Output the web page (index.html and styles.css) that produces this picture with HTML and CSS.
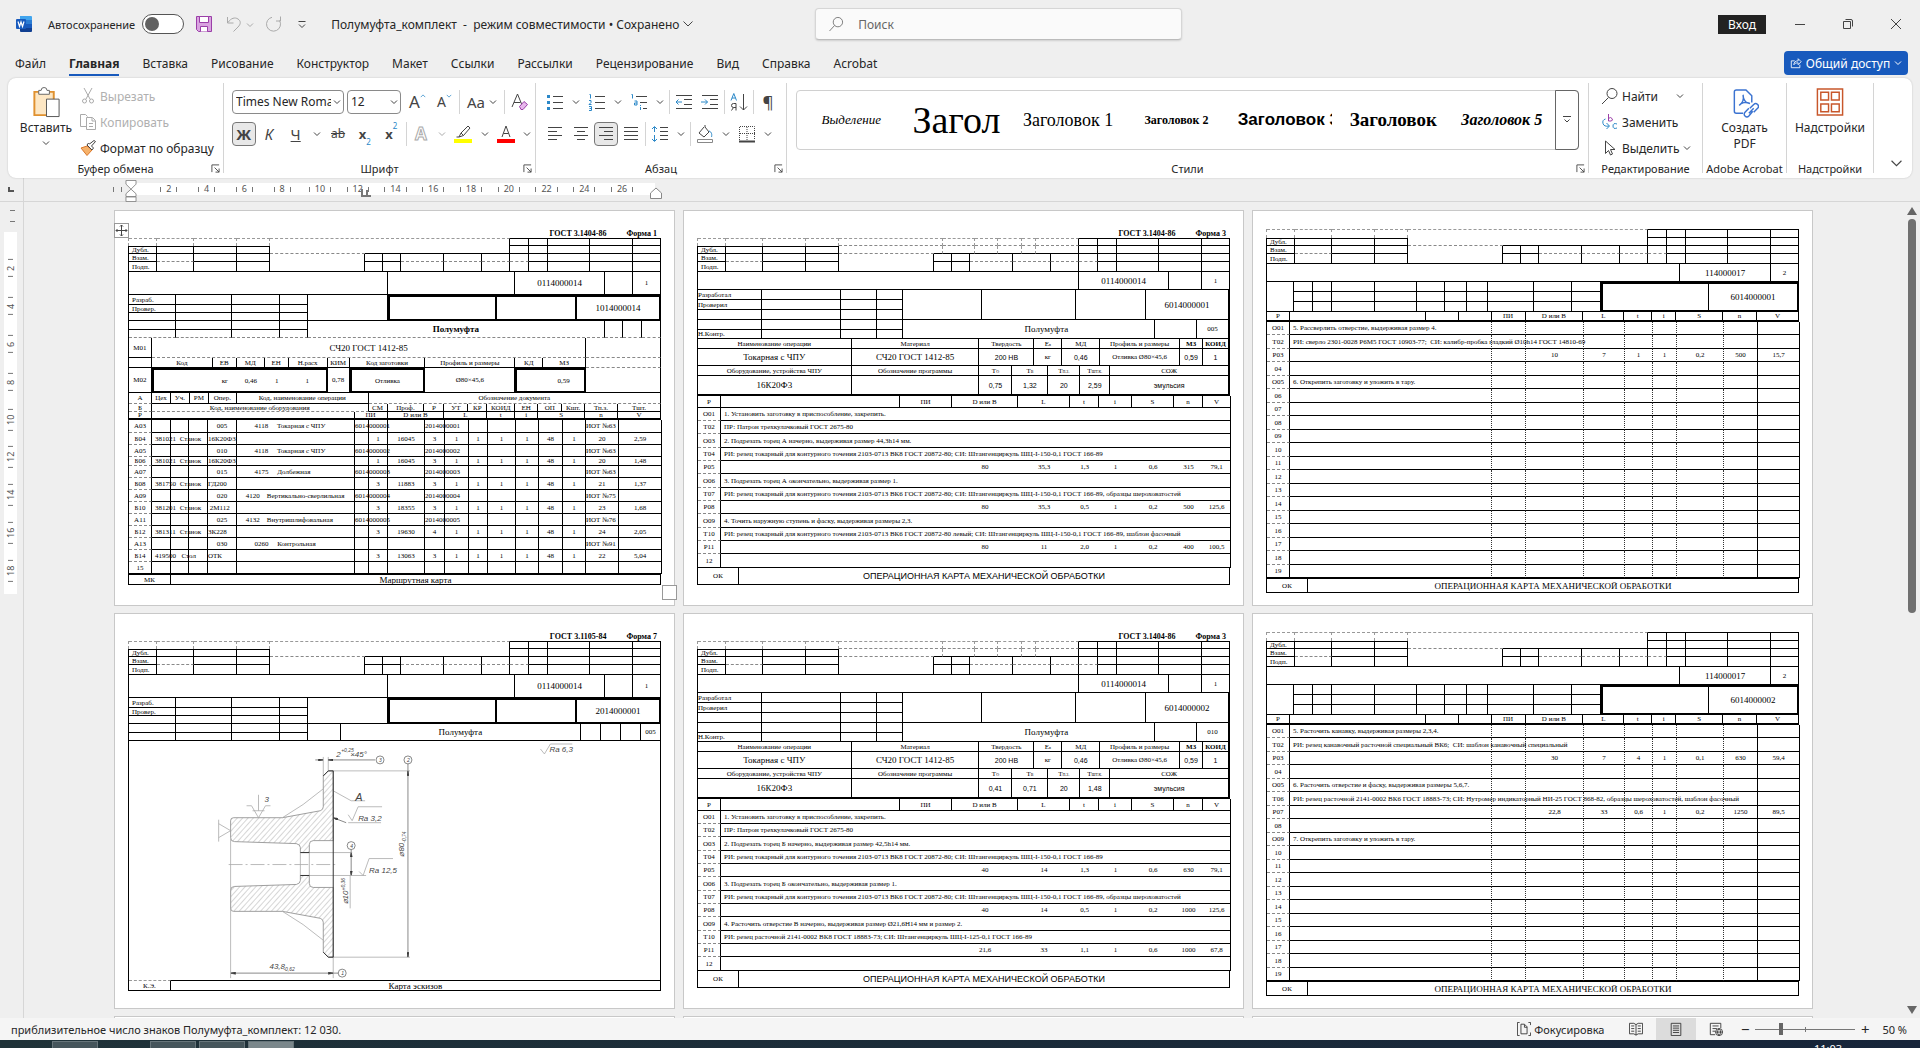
FILE: index.html
```html
<!doctype html>
<html lang="ru">
<head>
    <meta charset="UTF-8">
    <meta name="viewport" content="width=device-width, initial-scale=1.0">
    <title>Полумуфта_комплект - Word</title>
    <link rel="stylesheet" href="styles.css">
</head>
<body>
<svg class="defs" aria-hidden="true">
    <symbol id="chev" viewBox="0 0 8 8"><path d="M1 2.500l3 3 3-3"/></symbol>
    <symbol id="launch" viewBox="0 0 10 10"><path d="M1 9V1h8M4 4l5 5M9 5v4H5"/></symbol>
</svg>

<header class="titlebar">
    <svg class="word" viewBox="0 0 16 16"><path fill="#41a5ee" d="M4 0h11a1 1 0 0 1 1 1v4H4z"/><path fill="#2b7cd3" d="M4 4h12v4H4z"/><path fill="#185abd" d="M4 8h12v4H4z"/><path fill="#103f91" d="M4 12h12v3a1 1 0 0 1-1 1H5a1 1 0 0 1-1-1z"/><rect y="3" width="10" height="10" rx="1" fill="#185abd"/><path d="M2 5.500l1.500 5L5 6l1.500 4.500L8 5.500" fill="none" stroke="#fff" stroke-width="1.200"/></svg>
    <label class="autosave">Автосохранение <input type="checkbox" class="toggle"></label>
    <button class="qa save" aria-label="Сохранить"><svg viewBox="0 0 16 16"><path fill="#d9a3e0" stroke="#9b3fa8" d="M.5.500h15v15h-13l-2-2z"/><path fill="#fff" stroke="#9b3fa8" d="M3.500.500h9v6h-9zM4.500 15.500v-5h7v5"/></svg></button>
    <button class="qa undo dim" aria-label="Отменить"><svg viewBox="0 0 16 16"><path d="M1.500 1v6h6M2 6.500C5 2 9 1 12 3s3 5 0 8l-4.500 4.500"/></svg></button>
    <button class="chev dim" aria-label="Список отмены"><svg><use href="#chev"/></svg></button>
    <button class="qa redo dim" aria-label="Повторить"><svg viewBox="0 0 16 16"><path d="M10 5h4.500V.500M13.500 4.500A7 7 0 1 1 6 1.300"/></svg></button>
    <button class="qa more" aria-label="Настройка панели"><svg viewBox="0 0 16 16"><path d="M4.500 5.500h7M5 8.500l3 3 3-3"/></svg></button>
    <button class="doc-name">Полумуфта_комплект&nbsp; -&nbsp; режим совместимости • Сохранено <svg viewBox="0 0 10 10"><path d="M.5 2.500L5 7l4.500-4.500"/></svg></button>
    <label class="search">
        <svg viewBox="0 0 16 16"><circle cx="9.500" cy="6" r="5"/><path d="M6 9.500L.5 15.500"/></svg>
        <input type="text" placeholder="Поиск" aria-label="Поиск">
    </label>
    <button class="login">Вход</button>
    <div class="win">
        <button aria-label="Свернуть"><svg viewBox="0 0 10 10"><path d="M0 5.500h10"/></svg></button>
        <button aria-label="Восстановить"><svg viewBox="0 0 10 10"><path d="M.5 2.500h7v7h-7zM2.500.500H8A1.500 1.500 0 0 1 9.500 2v5.500"/></svg></button>
        <button aria-label="Закрыть"><svg viewBox="0 0 10 10"><path d="M0 0l10 10M10 0L0 10"/></svg></button>
    </div>
</header>

<nav class="tabs">
    <a href="#">Файл</a>
    <a href="#" class="on">Главная</a>
    <a href="#">Вставка</a>
    <a href="#">Рисование</a>
    <a href="#">Конструктор</a>
    <a href="#">Макет</a>
    <a href="#">Ссылки</a>
    <a href="#">Рассылки</a>
    <a href="#">Рецензирование</a>
    <a href="#">Вид</a>
    <a href="#">Справка</a>
    <a href="#">Acrobat</a>
    <button class="share"><svg viewBox="0 0 14 14"><path d="M5.500 4.500h-4v8h10V9M4.500 9c0-3 2-4.500 5-4.500V2L13 5.500 9.500 9V6.800C7 6.800 5.500 7.500 4.500 9z"/></svg>Общий доступ<svg class="c"><use href="#chev"/></svg></button>
</nav>

<section class="ribbon">
    <div class="group g-clip">
        <div class="body">
            <button class="big"><svg viewBox="0 0 28 32"><path fill="#fde7c4" stroke="#e0912f" stroke-width="2" d="M2 5h20v24H2z"/><path fill="#fff" stroke="#666" d="M6.500 7.500v-4H9A3 3 0 0 1 15 3.500h2.500v4z"/><path fill="#fff" stroke="#555" d="M14.500 12.500h13v18h-13z"/></svg>Вставить<svg class="c"><use href="#chev"/></svg></button>
            <div class="stack">
                <button class="dim"><svg viewBox="0 0 16 16"><path d="M4 0l6 11M12 0L6 11"/><circle cx="4.500" cy="13" r="2"/><circle cx="11.500" cy="13" r="2"/></svg>Вырезать</button>
                <button class="dim"><svg viewBox="0 0 16 16"><path d="M6 12.500H.5v-12h5l2 2M6.500 3.500h6l3 3v9h-9zM12 4v3h3M9 9.500h4M9 12.500h4"/></svg>Копировать</button>
                <button><svg viewBox="0 0 16 16"><path fill="#f6b26b" stroke="#d9772b" d="M1 8l6-2 5 4-5 5.500z"/><path fill="#fff" d="M7 5l5 5 1.500-2L11.500 6 15.500 1.500 14 .500 9.500 4 8.500 3z"/></svg>Формат по образцу</button>
            </div>
        </div>
        <footer>Буфер обмена<button class="launch" aria-label="Параметры"><svg><use href="#launch"/></svg></button></footer>
    </div>

    <div class="group g-font">
        <div class="body rows">
            <div class="row">
                <select class="font" aria-label="Шрифт"><option>Times New Roman</option></select>
                <select class="size" aria-label="Размер"><option>12</option></select>
                <button class="t cap">A<svg class="mark up"><use href="#chev"/></svg></button>
                <button class="t cap small">A<svg class="mark"><use href="#chev"/></svg></button>
                <i class="sep"></i>
                <button class="t wide">Aa<svg class="c"><use href="#chev"/></svg></button>
                <i class="sep"></i>
                <button class="t" aria-label="Очистить формат"><svg viewBox="0 0 18 18"><path d="M1 14L6.500 1 11 12M3 9.500h6.500"/><path fill="#e7b8ec" stroke="#9b3fa8" d="M8.500 13.500l4.500-5 3.500 3-4.500 5h-2z"/></svg></button>
            </div>
            <div class="row">
                <button class="t on"><b>Ж</b></button>
                <button class="t"><em>К</em></button>
                <button class="t"><u>Ч</u></button>
                <button class="chev" aria-label="Подчёркивание"><svg><use href="#chev"/></svg></button>
                <button class="t"><s>ab</s></button>
                <button class="t x"><b>x</b><sub>2</sub></button>
                <button class="t x"><b>x</b><sup>2</sup></button>
                <i class="sep"></i>
                <button class="t outline">A</button>
                <button class="chev dim" aria-label="Эффекты"><svg><use href="#chev"/></svg></button>
                <button class="t" aria-label="Цвет выделения"><svg viewBox="0 0 18 18"><path d="M5 12l2-4 7-7 2 2-6.500 7.500L5 12zM7 8l2.500 2.500M2.500 12H5"/><path fill="#ff0" stroke="none" d="M0 14h18v4H0z"/></svg></button>
                <button class="chev" aria-label="Выбор выделения"><svg><use href="#chev"/></svg></button>
                <button class="t" aria-label="Цвет текста"><svg viewBox="0 0 18 18"><path d="M5 12L9 1l4 11M6.500 8.500h5"/><path fill="red" stroke="none" d="M0 14h18v4H0z"/></svg></button>
                <button class="chev" aria-label="Выбор цвета"><svg><use href="#chev"/></svg></button>
            </div>
        </div>
        <footer>Шрифт<button class="launch" aria-label="Параметры"><svg><use href="#launch"/></svg></button></footer>
    </div>

    <div class="group g-par">
        <div class="body rows">
            <div class="row">
                <button class="t" aria-label="Маркеры"><svg viewBox="0 0 18 18"><path fill="#2b88c8" stroke="none" d="M1 2h3v3H1zM1 8h3v3H1zM1 14h3v3H1z"/><path d="M7 3.500h10M7 9.500h10M7 15.500h10"/></svg></button>
                <button class="chev" aria-label="Маркеры"><svg><use href="#chev"/></svg></button>
                <button class="t" aria-label="Нумерация"><svg viewBox="0 0 18 18"><path class="bl" d="M1.500 1.500h1v4M1 7.500h2v2L1 11.500h2.500M1 13.500h2.500v4H1M1.500 15.500h2"/><path d="M7 3.500h10M7 9.500h10M7 15.500h10"/></svg></button>
                <button class="chev" aria-label="Нумерация"><svg><use href="#chev"/></svg></button>
                <button class="t" aria-label="Многоуровневый список"><svg viewBox="0 0 18 18"><path class="bl" d="M1.500 1.500h1v4M4.500 8h2.500v4H4.500v-2H7M10.500 14v3M10.500 12v1"/><path d="M6 3.500h11M10 9.500h7M13 15.500h4"/></svg></button>
                <button class="chev" aria-label="Список"><svg><use href="#chev"/></svg></button>
                <i class="sep"></i>
                <button class="t" aria-label="Уменьшить отступ"><svg viewBox="0 0 18 18"><path d="M1 2.500h16M9 6.500h8M9 11.500h8M1 15.500h16"/><path class="bl" d="M7 9H1M3.500 6.500L1 9l2.500 2.500"/></svg></button>
                <button class="t" aria-label="Увеличить отступ"><svg viewBox="0 0 18 18"><path d="M1 2.500h16M9 6.500h8M9 11.500h8M1 15.500h16"/><path class="bl" d="M0 9h6.500M4 6.500L6.500 9 4 11.500"/></svg></button>
                <i class="sep"></i>
                <button class="t" aria-label="Сортировка"><svg viewBox="0 0 18 18"><path class="bl" d="M1 7.500L3.800.500 6.500 7.500M2 5h3.500"/><path d="M6 17.500v-7H3.500a2 2 0 0 0 0 4H6M3.500 14.500l-2 3M13.500 1v16M10 13.500l3.500 3.500 3.500-3.500"/></svg></button>
                <i class="sep"></i>
                <button class="t pil">¶</button>
            </div>
            <div class="row">
                <button class="t" aria-label="По левому краю"><svg viewBox="0 0 18 18"><path d="M2 2.500h14M2 6.500h9M2 10.500h14M2 14.500h9"/></svg></button>
                <button class="t" aria-label="По центру"><svg viewBox="0 0 18 18"><path d="M2 2.500h14M5 6.500h8M2 10.500h14M5 14.500h8"/></svg></button>
                <button class="t on" aria-label="По правому краю"><svg viewBox="0 0 18 18"><path d="M2 2.500h14M7 6.500h9M2 10.500h14M7 14.500h9"/></svg></button>
                <button class="t" aria-label="По ширине"><svg viewBox="0 0 18 18"><path d="M2 2.500h14M2 6.500h14M2 10.500h14M2 14.500h14"/></svg></button>
                <i class="sep"></i>
                <button class="t" aria-label="Интервал"><svg viewBox="0 0 18 18"><path class="bl" d="M3.500 2v5M1 4l2.500-2.500L6 4M3.500 10v6M1 14l2.500 2.500L6 14"/><path d="M9 2.500h8M9 6.500h8M9 10.500h8M9 14.500h8"/></svg></button>
                <button class="chev" aria-label="Интервал"><svg><use href="#chev"/></svg></button>
                <i class="sep"></i>
                <button class="t" aria-label="Заливка"><svg viewBox="0 0 18 18"><path d="M8 2L3 8l5 4 5-5-4-5V0"/><path class="bl" d="M13 6c3 1 3 4 2.500 6"/><path stroke="#888" d="M1.500 14.500h15v3h-15z"/></svg></button>
                <button class="chev" aria-label="Заливка"><svg><use href="#chev"/></svg></button>
                <button class="t" aria-label="Границы"><svg viewBox="0 0 18 18"><path stroke-dasharray="1 1" d="M1.500 15V1.500h15V15M9 2v13M2 8.500h15"/><path stroke-width="2" d="M1 16.500h16"/></svg></button>
                <button class="chev" aria-label="Границы"><svg><use href="#chev"/></svg></button>
            </div>
        </div>
        <footer>Абзац<button class="launch" aria-label="Параметры"><svg><use href="#launch"/></svg></button></footer>
    </div>

    <div class="group g-styles">
        <div class="body gallery">
            <button class="s-em">Выделение</button>
            <button class="s-title">Загол</button>
            <button class="s-h1">Заголовок 1</button>
            <button class="s-h2">Заголовок 2</button>
            <button class="s-h3">Заголовок 3</button>
            <button class="s-h4">Заголовок</button>
            <button class="s-h5">Заголовок 5</button>
            <button class="drop" aria-label="Все стили"><svg viewBox="0 0 8 8"><path d="M0 .500h8M1.500 3.500L4 6l2.500-2.500"/></svg></button>
        </div>
        <footer>Стили<button class="launch" aria-label="Параметры"><svg><use href="#launch"/></svg></button></footer>
    </div>

    <div class="group g-edit">
        <div class="body stack">
            <button><svg viewBox="0 0 16 16"><circle cx="10" cy="5.500" r="5"/><path d="M6.500 9.500L0 16"/></svg>Найти<svg class="c far"><use href="#chev"/></svg></button>
            <button><svg viewBox="0 0 16 16"><path stroke="#9b3fa8" d="M6.500 0v7M6.500 4.500q2-2 3.500 0t-1 2.500h-2.500"/><path class="bl" d="M15 10q-4-1.500-4 2t4 2M3.500 5Q0 6 1 9.500t6 2.500M4.500 9L7.500 12l-3 3"/></svg>Заменить</button>
            <button><svg viewBox="0 0 16 16"><path d="M3.500 1v12.500l3-3 2 4.500 2-1-2-4.500H13z"/></svg>Выделить<svg class="c"><use href="#chev"/></svg></button>
        </div>
        <footer>Редактирование</footer>
    </div>

    <div class="group g-pdf">
        <div class="body">
            <button class="big"><svg viewBox="0 0 28 32"><path stroke="#3b73d1" stroke-width="1.500" d="M12 27H5a2 2 0 0 1-2-2V5a2 2 0 0 1 2-2h10l6 6v7M8 19c4-3 5-7 4-11M8 19c2-3 7-4 11-2-4 0-6-3-7-7"/><path stroke="#3b73d1" stroke-width="1.500" d="M19 22l4-4a2.800 2.800 0 0 1 4 4l-4 4M22 25l-4 5a2.800 2.800 0 0 1-4-4l4-4M18 27l5-5"/></svg><span>Создать<br>PDF</span></button>
        </div>
        <footer>Adobe Acrobat</footer>
    </div>

    <div class="group g-add">
        <div class="body">
            <button class="big"><svg viewBox="0 0 28 32"><path stroke="#c8572b" stroke-width="1.500" d="M1 2h26v27H1zM4.500 5.500h8v8h-8zM15.500 5.500h8v8h-8zM4.500 17.500h8v8h-8zM15.500 17.500h8v8h-8z"/></svg>Надстройки</button>
        </div>
        <footer>Надстройки</footer>
    </div>
    <button class="collapse" aria-label="Свернуть ленту"><svg viewBox="0 0 10 10"><path d="M.5 2.500L5 7l4.500-4.500"/></svg></button>
</section>

<div class="hruler">
    <span class="corner"><i></i></span>
    <span class="margin-ticks"></span>
    <div class="scale" id="hscale">
        <svg class="indent" viewBox="0 0 12 24"><path d="M.5.500h11v4L6 10l5.500 5v3H.5v-3L6 10 .5 4.500zM.5 18.500h11v5H.5z"/></svg>
        <svg class="tabstop" viewBox="0 0 12 8"><path d="M1 0v7h9M6 1v6"/></svg>
        <svg class="indent right" viewBox="0 0 12 12"><path d="M.5 11.500V6L6 1l5.500 5v5.500z"/></svg>
    </div>
</div>

<main class="workspace">
    <div class="vruler"><div class="vscale" id="vscale"></div></div>
    <div class="canvas" id="canvas"></div>
    <div class="scroll"><i class="arr up"></i><i class="thumb"></i><i class="arr down"></i></div>
</main>

<footer class="status">
    <span>приблизительное число знаков Полумуфта_комплект: 12 030.</span>
    <button class="focus"><svg viewBox="0 0 16 16"><path d="M3 .500H.5V15.500H3M13 .500h2.500v3M15.500 12v3.500H13M4.500 2.500h4l3 3v8h-7zM8.500 3v3h3"/></svg>Фокусировка</button>
    <button class="view" aria-label="Режим чтения"><svg viewBox="0 0 16 16"><path d="M8 3L5.500 1.500h-5v12h5L8 15l2.500-1.500h5v-12h-5zM8 3v12M2.500 4.500H6M2.500 7.500H6M2.500 10.500H6M10 4.500h3.500M10 7.500h3.500M10 10.500h3.500"/></svg></button>
    <button class="view on" aria-label="Разметка страницы"><svg viewBox="0 0 16 16"><path d="M2.500 1.500h11v14h-11zM4.500 4.500h7M4.500 7h7M4.500 9.500h7M4.500 12h7"/></svg></button>
    <button class="view" aria-label="Веб-документ"><svg viewBox="0 0 16 16"><path d="M7 14.500H1.500v-13h12V7M4 4.500h7M4 7.500h5M4 10.500h3"/><circle cx="11.500" cy="11.500" r="4"/><path d="M7.500 11.500h8M11.500 7.500q-3.500 4 0 8q3.500-4 0-8"/></svg></button>
    <button class="zoom" aria-label="Уменьшить">−</button>
    <input type="range" class="slider" min="0" max="100" value="25" aria-label="Масштаб">
    <button class="zoom" aria-label="Увеличить">+</button>
    <span class="percent">50 %</span>
</footer>
<div class="taskbar"><i></i><i class="gap"></i><i></i><i class="act"></i><span>11:03</span></div>

<template id="sketch">
    <svg class="sketch" viewBox="0 0 533 240">
        <defs>
            <pattern id="hatch" width="4" height="4" patternUnits="userSpaceOnUse" patternTransform="rotate(42)"><path d="M0 0v4" stroke="#999" stroke-width=".8"/></pattern>
            <marker id="ar" viewBox="0 0 8 4" refX="8" refY="2" markerWidth="7" markerHeight="4" orient="auto-start-reverse"><path d="M0 0l8 2-8 2z" fill="#333"/></marker>
        </defs>
        <g fill="url(#hatch)" stroke="#888" stroke-width=".8">
            <path d="M102 80q0-3 3-3h49l38-7q3-1 3-4V35l5-5h5v70h-20q-4 0-4 4v8h-9v-5q0-3-4-4l-62-2q-4 0-4-4z"/>
            <path d="M102 168q0 3 3 3h49l38 7q3 1 3 4v30l5 5h5v-70h-20q-4 0-4-4v-8h-9v5q0 3-4 4l-62 2q-4 0-4 4z"/>
        </g>
        <g fill="none" stroke="#aaa" stroke-width=".8">
            <path d="M154 77q21-12 41-29M154 171q21 12 41 29M102 98v140M205 217v21M172 112v23M181 112v23M195 16v19M200 16v14"/>
            <path d="M205 30h77M205 217h77M181 112h43M181 135h57"/>
            <path stroke-dasharray="14 3 2 3" d="M100 124h107"/>
            <path d="M222 168v-33M130 54v16M118 65h5l7 12 7-12h5M124 70h12M90 79v22M90 83l12 7-12 7"/>
            <path d="M205 50l18 10h14M220 74l4 6 6-14h24M220 82h33M231 131l4 4 6-17h24M413 8l4 5 6-10h22"/>
        </g>
        <path fill="none" stroke="#333" d="M205 30v187M200 30h5M200 217h5M195 35l5-5M195 212l5 5M172 112h9M172 135h9"/>
        <g fill="none" stroke="#555" stroke-width=".7">
            <path marker-start="url(#ar)" marker-end="url(#ar)" d="M280 30v187"/>
            <path marker-start="url(#ar)" marker-end="url(#ar)" d="M102 233h103"/>
            <path marker-start="url(#ar)" marker-end="url(#ar)" d="M223 112v23"/>
            <path marker-end="url(#ar)" d="M187 19h8"/><path marker-start="url(#ar)" d="M200 19h47"/>
            <path marker-start="url(#ar)" d="M205 77l13 5"/><path d="M205 233h5M280 23v7M223 109v3"/>
            <circle cx="252" cy="19" r="4"/><circle cx="280" cy="19" r="4"/><circle cx="223" cy="105" r="4"/><circle cx="214" cy="233" r="4"/>
        </g>
        <g class="dim-text">
            <text x="208" y="16">2</text><text x="213" y="11" class="sm">+0,25</text><text x="222" y="16">×45°</text>
            <text x="227" y="60" class="lg">А</text><text x="136" y="61">3</text>
            <text x="230" y="80">Ra 3,2</text><text x="241" y="133">Ra 12,5</text><text x="422" y="11">Ra 6,3</text>
            <text x="141" y="229">43,8</text><text x="155" y="231" class="sm">-0,62</text>
            <text transform="translate(276 116) rotate(-90)">⌀80<tspan class="sm" dy="2">-0,74</tspan></text>
            <text transform="translate(220 164) rotate(-90)">⌀10<tspan class="sm" dy="-3">+0,36</tspan></text>
            <text x="251" y="21" class="sm">3</text><text x="279" y="21" class="sm">2</text><text x="222" y="107" class="sm">4</text><text x="213" y="235" class="sm">1</text>
        </g>
    </svg>
</template>
<script src="forms.js"></script>
</body>
</html>
```

FILE: styles.css
```css
*{
    box-sizing: border-box;
}
body{
    margin: 0;
    height: 100vh;
    display: flex;
    flex-direction: column;
    overflow: hidden;
    background: #efefef;
    color: #262626;
    font-family: "Noto Sans", "Open Sans", sans-serif;
    font-size: 12px;
}
button, input, select{
    font: inherit;
    color: inherit;
}
button{
    border: 0;
    padding: 0;
    background: none;
    white-space: nowrap;
}
a{
    color: inherit;
    text-decoration: none;
}
svg{
    fill: none;
    stroke: #444;
    flex: none;
}
.bl{
    stroke: #2b88c8;
}
.defs{
    display: none;
}
.dim, .stack .dim{
    color: #b0b0b0;
}
.dim svg{
    stroke: #aaa;
}

/* title bar */
.titlebar{
    height: 48px;
    flex: none;
    display: flex;
    align-items: center;
    padding: 0 0 0 16px;
}
.word{
    width: 16px;
    height: 16px;
    stroke: none;
    margin-right: 16px;
}
.autosave{
    display: flex;
    align-items: center;
    gap: 7px;
    font-size: 11px;
    margin-right: 12px;
}
.toggle{
    appearance: none;
    width: 42px;
    height: 20px;
    margin: 0;
    border: 1px solid #555;
    border-radius: 10px;
    background: #fff;
    display: flex;
    align-items: center;
    padding: 0 2px;
}
.toggle::before{
    content: "";
    width: 14px;
    height: 14px;
    border-radius: 50%;
    background: #616161;
}
.qa{
    height: 16px;
}
.qa svg{
    display: block;
    width: 16px;
    height: 16px;
}
.save{
    margin-right: 14px;
}
.redo{
    margin: 0 12px 0 8px;
}
.chev{
    width: 16px;
}
.chev svg, .c{
    width: 8px;
    height: 8px;
}
.doc-name{
    margin-left: 21px;
    width: 470px;
    text-align: left;
}
.doc-name svg{
    width: 10px;
    height: 10px;
}
.search{
    width: 367px;
    height: 32px;
    margin-left: 14px;
    display: flex;
    align-items: center;
    gap: 14px;
    padding: 0 13px;
    background: #fafafa;
    border: 1px solid #d6d6d6;
    border-bottom-color: #bbb;
    border-radius: 4px;
    box-shadow: 0 1px 2px #0002;
}
.search svg{
    width: 15px;
    height: 16px;
    stroke: #777;
}
.search input{
    flex: 1;
    border: 0;
    padding: 0;
    background: none;
}
.search input::placeholder{
    color: #666;
}
.login{
    margin-left: auto;
    width: 48px;
    height: 19px;
    background: #222;
    color: #fff;
}
.win{
    display: flex;
    margin-left: 10px;
}
.win button{
    width: 48px;
}
.win svg{
    width: 10px;
    height: 10px;
}

/* tabs */
.tabs{
    height: 30px;
    flex: none;
    display: flex;
    align-items: center;
    gap: 23px;
    padding: 0 12px 0 15px;
}
.tabs a{
    height: 26px;
    line-height: 28px;
    border-bottom: 2px solid transparent;
}
.tabs .on{
    font-weight: bold;
    border-color: #185abd;
}
.share{
    margin-left: auto;
    width: 124px;
    height: 24px;
    display: flex;
    align-items: center;
    justify-content: center;
    gap: 4px;
    background: #185abd;
    color: #fff;
    border-radius: 4px;
}
.share svg{
    stroke: #fff;
    width: 12px;
    height: 12px;
}
.share .c{
    width: 8px;
}

/* ribbon */
.ribbon{
    height: 100px;
    flex: none;
    margin: 0 8px;
    padding: 5px 0;
    display: flex;
    background: #fff;
    border-radius: 8px;
    box-shadow: 0 0 2px #0003;
    position: relative;
}
.group{
    display: flex;
    flex-direction: column;
    border-right: 1px solid #d4d4d4;
}
.g-clip{ width: 216px; }
.g-font{ width: 312px; }
.g-par{ width: 251px; }
.g-styles{ flex: 1; min-width: 0; }
.g-edit{ width: 114px; }
.g-pdf{ width: 84px; }
.g-add{ width: 87px; margin-right: 38px; }
.group .body{
    flex: 1;
    display: flex;
    min-height: 0;
}
.group footer{
    height: 10px;
    margin-top: auto;
    display: flex;
    justify-content: center;
    align-items: center;
    font-size: 11px;
    position: relative;
    white-space: nowrap;
}
.launch{
    position: absolute;
    right: 3px;
    top: 0;
    height: 10px;
}
.launch svg{
    display: block;
    width: 9px;
    height: 9px;
}
.big{
    flex: 1;
    display: flex;
    flex-direction: column;
    align-items: center;
    justify-content: flex-start;
    line-height: 16px;
    padding-top: 4px;
}
.big svg{
    width: 28px;
    height: 31px;
    margin-bottom: 2px;
}
.big .c{
    width: 8px;
    height: 8px;
    margin-top: 3px;
}
.g-clip .big{
    flex: none;
    width: 68px;
    margin-left: 4px;
}
.stack{
    display: flex;
    flex-direction: column;
}
.group .stack button, .g-edit button{
    height: 26px;
    display: flex;
    align-items: center;
    gap: 4px;
    text-align: left;
}
.stack svg{
    width: 16px;
    height: 16px;
}
.stack .c{
    width: 8px;
    height: 8px;
}
.stack .far{
    margin-left: 14px;
}
.g-edit .stack{
    flex-direction: column;
    padding-left: 13px;
}
.group .rows{
    flex-direction: column;
    gap: 9px;
    padding: 7px 0 0 8px;
}
.row{
    height: 23px;
    display: flex;
    align-items: center;
}
.row select{
    appearance: none;
    height: 24px;
    border: 1px solid #8a8a8a;
    border-radius: 4px;
    padding: 0 12px 0 3px;
    margin-right: 3px;
    background: #fff url('data:image/svg+xml,<svg xmlns="http://www.w3.org/2000/svg" viewBox="0 0 8 8" fill="none" stroke="%23444"><path d="M1 2.500l3 3 3-3"/></svg>') no-repeat right 2px center / 8px;
}
.font{
    width: 112px;
}
.size{
    width: 54px;
}
.t{
    width: 27px;
    height: 24px;
    display: flex;
    align-items: center;
    justify-content: center;
    font-size: 15px;
    color: #444;
}
.row .t{
    font-size: 15px;
}
.t svg{
    width: 18px;
    height: 18px;
}
.t.on{
    width: 24px;
    border: 1px solid #777;
    border-radius: 4px;
    background: #e8e8e8;
}
.t.x b{
    font-size: 13px;
}
.t sub, .t sup{
    font-size: 8px;
    color: #2b88c8;
    line-height: 8px;
}
.t sub{
    align-self: flex-end;
}
.t sup{
    align-self: flex-start;
}
.t s{
    font-size: 12px;
}
.t .c{
    width: 8px;
    height: 8px;
    margin-left: 4px;
}
.t.wide{
    width: 42px;
}
.row .cap{
    font-size: 17px;
}
.row .cap.small{
    font-size: 14px;
}
.t .mark{
    width: 6px;
    height: 6px;
    align-self: flex-start;
    margin-top: 3px;
    stroke: #2b88c8;
}
.mark.up{
    rotate: 180deg;
}
.row .outline{
    font-size: 17px;
    font-weight: bold;
    color: #fff;
    -webkit-text-stroke: 1px #aaa;
}
.row .pil{
    font-size: 17px;
}
.sep{
    width: 1px;
    height: 24px;
    margin: 0 1px;
    background: #d4d4d4;
}
.g-par .t{
    width: 26px;
}
.g-par .t.on{
    width: 24px;
}
.g-par .rows{
    padding-left: 6px;
}

/* styles gallery */
.group .gallery{
    flex: none;
    height: 60px;
    margin: 7px 9px 0;
    border: 1px solid #d0d0d0;
    border-radius: 4px;
}
.gallery button{
    flex: 1;
    min-width: 0;
    overflow: clip;
    overflow-clip-margin: content-box;
    padding: 0 7px;
    font-family: "Liberation Serif", serif;
    color: #000;
}
.gallery .s-em{
    font-size: 13px;
    font-style: italic;
}
.gallery .s-title{
    font-size: 38px;
    text-align: left;
}
.gallery .s-h1{
    font-size: 18px;
}
.gallery .s-h2{
    font-size: 12px;
    font-weight: bold;
}
.gallery .s-h3{
    font: bold 17px "Liberation Sans", sans-serif;
    text-align: left;
}
.gallery .s-h4{
    font-size: 19px;
    font-weight: bold;
}
.gallery .s-h5{
    font-size: 16px;
    font-weight: bold;
    font-style: italic;
}
.gallery .drop{
    flex: none;
    width: 24px;
    margin: -1px;
    border: 1px solid #666;
    border-radius: 0 4px 4px 0;
}
.drop svg{
    width: 8px;
    height: 8px;
}
.collapse{
    position: absolute;
    right: 10px;
    bottom: 5px;
}
.collapse svg{
    width: 11px;
    height: 11px;
}

/* rulers */
.hruler{
    height: 24px;
    flex: none;
    display: flex;
    border-bottom: 1px solid #d6d6d6;
    font-size: 9px;
    color: #555;
}
.corner{
    width: 24px;
    border-right: 1px solid #d6d6d6;
}
.corner i{
    display: block;
    width: 6px;
    height: 5px;
    margin: 9px 0 0 8px;
    border: solid #555;
    border-width: 0 0 2px 2px;
}
.margin-ticks{
    width: 9px;
    height: 5px;
    margin: 9px 9px 0 89px;
    border: solid #777;
    border-width: 0 1px;
}
.scale{
    width: 524px;
    height: 12px;
    margin-top: 5px;
    padding: 0 14px 0 19px;
    display: flex;
    background: #fff;
    position: relative;
}
.scale span, .vscale span{
    flex: 1;
    display: flex;
    align-items: center;
    justify-content: center;
    gap: 5px;
    line-height: 12px;
}
.scale span::before, .scale span::after{
    content: "";
    width: 1px;
    height: 5px;
    background: #777;
}
.indent{
    position: absolute;
    left: -6px;
    top: -3px;
    width: 12px;
    height: 22px;
    fill: #fff;
    stroke: #888;
}
.indent.right{
    left: auto;
    right: -7px;
    top: 4px;
    height: 12px;
}
.tabstop{
    position: absolute;
    left: 230px;
    top: 6px;
    width: 12px;
    height: 8px;
    stroke: #777;
    stroke-width: 2;
}
.vruler{
    width: 24px;
    flex: none;
    border-right: 1px solid #d6d6d6;
}
.vruler::before{
    content: "";
    display: block;
    width: 5px;
    height: 10px;
    margin: 8px 0 0 10px;
    border: solid #777;
    border-width: 1px 0;
}
.vscale{
    width: 13px;
    height: 362px;
    margin: 10px 0 0 4px;
    padding: 17px 0 4px;
    display: flex;
    flex-direction: column;
    background: #fff;
    font-size: 9px;
    color: #555;
}
.vscale span{
    writing-mode: vertical-rl;
    rotate: 180deg;
    line-height: 13px;
}
.vscale span::before, .vscale span::after{
    content: "";
    width: 5px;
    height: 1px;
    background: #777;
}

/* workspace */
.workspace{
    flex: 1;
    min-height: 0;
    display: flex;
    overflow: hidden;
}
.canvas{
    flex: 1;
    min-width: 0;
    display: grid;
    grid-template-columns: repeat(3, minmax(0, 1fr));
    grid-auto-rows: max-content;
    gap: 7px 8px;
    padding: 8px 90px 0;
    overflow: hidden;
}
.scroll{
    width: 17px;
    flex: none;
    display: flex;
    flex-direction: column;
    align-items: center;
    padding: 5px 0 4px;
}
.arr{
    border: 5px solid transparent;
}
.arr.up{
    border-top: 0;
    border-bottom: 8px solid #666;
}
.arr.down{
    border-bottom: 0;
    border-top: 8px solid #666;
    margin-top: auto;
}
.thumb{
    width: 8px;
    height: 394px;
    margin-top: 4px;
    border-radius: 4px;
    background: #707070;
}

/* document pages */
.sheet{
    min-height: 396px;
    padding: 0 13px 10px;
    background: #fff;
    border: 1px solid #c8c8c8;
    position: relative;
    font: 7px/7px "Liberation Serif", serif;
    color: #000;
}
.gost{
    height: 27px;
    display: flex;
    justify-content: flex-end;
    align-items: flex-end;
    gap: 20px;
    padding-right: 4px;
    font-size: 8px;
    line-height: 9px;
    font-weight: bold;
}
.gost.empty{
    height: 18px;
}
.anchor, .grip{
    position: absolute;
    background: #fff;
    border: 1px solid #999;
}
.anchor{
    left: -1px;
    top: 12px;
    width: 15px;
    height: 15px;
}
.anchor svg{
    display: block;
    width: 13px;
    height: 13px;
}
.grip{
    right: -3px;
    bottom: 5px;
    width: 15px;
    height: 15px;
}

/* cells: borders go right and bottom, the band closes the left side */
.band{
    display: grid;
    border-left: 1px solid #000;
}
.band.open{
    border-left: 1px dashed #999;
}
.cell{
    display: flex;
    align-items: center;
    justify-content: center;
    padding-top: 1px;
    white-space: pre;
    min-width: 0;
    min-height: 0;
    border: 0 solid #000;
    border-width: 0 1px 1px 0;
}
.grid{
    width: 100%;
    table-layout: fixed;
    border-spacing: 0;
    border-left: 1px solid #000;
}
.grid td{
    padding: 1px 0 0;
    text-align: center;
    white-space: pre;
    border: 0 solid #000;
    border-width: 0 1px 1px 0;
}
.sheet .dt{ border-top: 1px dashed #999; }
.sheet .st{ border-top: 1px solid #000; }
.sheet .dr{ border-right: 1px dashed #999; }
.sheet .or{ border-right: 1px dotted #333; }
.sheet .db{ border-bottom: 1px dashed #888; }
.sheet .nr{ border-right: 0; }
.sheet .nb{ border-bottom: 0; }
.sheet .k{ border-top: 2px solid #000; border-bottom: 2px solid #000; }
.sheet .kt{ border-top: 2px solid #000; }
.sheet .kb{ border-bottom: 2px solid #000; }
.sheet .kr{ border-right: 2px solid #000; }
.sheet .kl{ border-left: 2px solid #000; }
.sheet .l{ justify-content: flex-start; text-align: left; padding-left: 3px; }
.sheet .f{ justify-content: flex-start; text-align: left; }
.sheet .b{ font-weight: bold; }
.sheet .lg{ font-size: 9px; line-height: 9px; }
.sheet .sans{ font-family: "Liberation Sans", sans-serif; }
.r2{ grid-row: span 2; }
.r3{ grid-row: span 3; }
.cell sub{
    font-size: 4px;
    align-self: flex-end;
}
.area{
    border: solid #000;
    border-width: 0 1px;
}
.sketch{
    display: block;
    width: 100%;
}
.dim-text{
    fill: #444;
    stroke: none;
    font: italic 8px "Liberation Sans", sans-serif;
}
.dim-text .sm{
    font-size: 5px;
}
.dim-text .lg{
    font-size: 11px;
}

/* status bar */
.status{
    height: 22px;
    flex: none;
    display: flex;
    align-items: center;
    padding: 0 13px 0 11px;
    background: #f5f5f5;
    font-size: 11px;
}
.focus{
    margin-left: auto;
    margin-right: 12px;
    display: flex;
    align-items: center;
    gap: 3px;
}
.status svg{
    width: 14px;
    height: 14px;
    display: block;
    stroke: #333;
}
.view{
    width: 40px;
    height: 22px;
    display: flex;
    align-items: center;
    justify-content: center;
}
.view.on{
    background: #dcdcdc;
}
.zoom{
    width: 18px;
    font-size: 15px;
    line-height: 20px;
}
.slider{
    appearance: none;
    width: 100px;
    height: 12px;
    margin: 0 1px;
    background: linear-gradient(#777, #777) center / 100% 1px no-repeat, linear-gradient(#777, #777) center / 1px 5px no-repeat;
}
.slider::-webkit-slider-thumb{
    appearance: none;
    width: 4px;
    height: 12px;
    background: #666;
}
.percent{
    margin-left: 8px;
    white-space: nowrap;
}
.taskbar{
    height: 8px;
    flex: none;
    display: flex;
    gap: 3px;
    padding: 1px 78px 0 52px;
    overflow: hidden;
    background: linear-gradient(90deg, #1f3238, #17253a);
    color: #fff;
}
.taskbar i{
    width: 46px;
    background: #45555b;
    border: 1px solid #67757a;
    border-bottom: 0;
}
.taskbar .gap{
    margin-left: 49px;
}
.taskbar .act{
    background: #7a878b;
}
.taskbar span{
    margin-left: auto;
    font-size: 11px;
    line-height: 16px;
}
```

FILE: forms.js
```js
(function () {
    // cell text and its border classes are written as 'text|classes'
    function parts(s) {
        var p = s.split('|');
        return {text: p[0], cls: p[1] || '', span: p[2] || 1};
    }
    function many(n, s) {
        return Array(n).fill(s || '');
    }
    function widths(ends) {
        return ends.map(function (x, i) { return x - (i ? ends[i - 1] : 0); });
    }
    function band(ends, heights, cells, cls) {
        var cols = widths(ends).map(function (w) { return 'minmax(0,' + w + 'fr)'; }).join(' ');
        var rows = heights.map(function (h) { return h + 'px'; }).join(' ');
        return '<div class="band ' + (cls || '') + '" style="grid-template-columns:' + cols + ';grid-template-rows:' + rows + '">' +
            cells.map(function (s) {
                var c = parts(s);
                return '<div class="cell ' + c.cls + '">' + c.text + '</div>';
            }).join('') + '</div>';
    }
    function table(ends, rows) {
        return '<table class="grid"><colgroup>' +
            widths(ends).map(function (w) { return '<col style="width:' + w + 'px">'; }).join('') + '</colgroup>' +
            rows.map(function (r) {
                return '<tr style="height:' + r[0] + 'px">' + r[1].map(function (s) {
                    var c = parts(s);
                    return '<td class="' + c.cls + '" colspan="' + c.span + '">' + c.text + '</td>';
                }).join('') + '</tr>';
            }).join('') + '</table>';
    }
    function sheet(gost, body, extra) {
        var head = gost ? '<div class="gost"><span>' + gost[0] + '</span><span>' + gost[1] + '</span></div>' : '<div class="gost empty"></div>';
        return '<article class="sheet">' + head + body + (extra || '') + '</article>';
    }

    var R = [382, 401, 420, 462, 505, 533];
    function stamp(h, drops) {
        var L = [28, 65, 108, 141];
        var s = '';
        if (drops) {
            s += band(L.concat([245, 278, 301, 325, 339], R), [h], many(4, '|dt dr nb').concat(many(5, '|dt dr db'), '|dt db', many(5, '|st')), 'open');
            s += band(L.concat([236, 245, 278, 301, 325, 339], R), [8], ['Дубл.|l st', '|st', '|st', '|st', '|nr db', '|dr'].concat(many(4, '|dr'), many(6)));
        } else {
            s += band(L.concat(R), [h], many(4, '|dt dr nb').concat('|dt nb', many(5, '|st')), 'open');
            s += band(L.concat(236, R), [8], ['Дубл.|l st', '|st', '|st', '|st', '|nr db', '|'].concat(many(5)));
        }
        s += band(L.concat([236, 254, 273, 316, 354], R), [8, 10],
            ['Взам.|l', '|db', '', '', '|nb', '', '', '|db', '|db', '|db', '|db', '', '', '', '', 'Подп.|l'].concat(many(14)));
        return s;
    }

    function head1(number) {
        return stamp(8) +
            band([259, 387, 477, 505, 533], [23], ['', '', '0114000014|lg', '', '1']) +
            band([47, 103, 151, 179, 259, 369, 449, 533], [10, 8, 8],
                ['Разраб.|l', '', '', '', '|r3', '|r3 k kl kr', '|r3 k kr', number + '|r3 k kr lg', 'Провер.|l'].concat(many(7)));
    }

    // route card
    function routeCard() {
        var C = [23, 42, 60, 79, 108, 226, 240, 259, 296, 316, 340, 359, 387, 410, 434, 457, 490, 533];
        function a(n, op, code, name, card, doc, iot) {
            var pad = name.length > 16 ? ' \u2003' : '  \u2003\u2003';
            return ['А' + n + '|db', '', '', '', op, pad + code + '\u2003' + name + '|f', card + '|f', '', '', doc + '|f'].concat(many(6), 'ИОТ №' + iot + '|f', '');
        }
        function b(n, inv, st, model, cm, prof, r, tp, ts) {
            return ['Б' + n + '|db', inv + '|l', '\u2003 ' + st + '|f', '', model + '|f', '', '', cm, prof, r, '1', '1', '1', '1', '48', '1', tp, ts];
        }
        return sheet(['ГОСТ 3.1404-86', 'Форма 1'],
            head1('1014000014') +
            band([47, 103, 151, 179, 477, 495, 514, 533], [9, 8], ['', '', '', '', 'Полумуфта|r2 b lg db', '|r2 db', '|r2 db', '|r2 db', '|db', '|db', '|db', '|db']) +
            band([23, 458, 533], [20], ['М01', 'СЧ20 ГОСТ 1412-85|lg db', '|db']) +
            band([23, 84, 108, 136, 160, 199, 221, 297, 387, 415, 458, 533], [10],
                ['', 'Код', 'ЕВ', 'МД', 'ЕН', 'Н.расх', 'КИМ', 'Код заготовки', 'Профиль и размеры', 'КД', 'МЗ', '|db']) +
            band([23, 84, 108, 136, 160, 199, 221, 297, 387, 415, 458, 533], [25],
                ['М02', '|k kl nr', 'кг|k nr', '0,46|k nr', '1|k nr', '1|k kr', '0,78', 'Отливка|k kl kr', 'Ø80×45,6', '|k kl nr', '0,59|k kr', '']) +
            band([23, 42, 61, 80, 108, 240, 533], [11], ['А|db', 'Цех', 'Уч.', 'РМ', 'Опер.', 'Код, наименование операции', 'Обозначение документа|db']) +
            band([23, 240, 259, 296, 316, 340, 359, 387, 410, 434, 457, 490, 533], [8],
                ['Б|db', 'Код, наименование оборудования|db', 'СМ', 'Проф.', 'Р', 'УТ', 'КР', 'КОИД', 'ЕН', 'ОП', 'Кшт.', 'Тп.з.', 'Тшт.']) +
            band([23, 226, 259, 316, 359, 387, 410, 457, 490, 533], [8],
                ['Р|kb', '|kb', 'ПИ|kb', 'D или В|kb', 'L|kb', 't|kb', 'i|kb', 'S|kb', 'n|kb', 'V|kb']) +
            table(C, [
                [13, a('03', '005', '4118', ' Токарная с ЧПУ', '6014000001', '2014000001', 63)],
                [12, b('04', '381021', 'Станок', '16К20Ф3', '1', '16045', '3', '20', '2,59')],
                [12, a('05', '010', '4118', ' Токарная с ЧПУ', '6014000002', '2014000002', 63)],
                [9, b('06', '381021', 'Станок', '16К20Ф3', '1', '16045', '3', '20', '1,48')],
                [12, a('07', '015', '4175', ' Долбежная', '6014000003', '2014000003', 63)],
                [12, b('08', '381750', 'Станок', 'ГД200', '3', '11883', '3', '21', '1,37')],
                [12, a('09', '020', '4120', 'Вертикально-сверлильная', '6014000004', '2014000004', 75)],
                [12, b('10', '381201', 'Станок', ' 2М112', '3', '18355', '3', '23', '1,68')],
                [12, a('11', '025', '4132', 'Внутришлифовальная', '6014000005', '2014000005', 76)],
                [12, b('12', '381311', 'Станок', '3К228', '3', '19630', '4', '24', '2,05')],
                [12, a('13', '030', '0260', ' Контрольная', '', '', 91)],
                [12, b('14', '419500', ' Стол', 'ОТК', '3', '13063', '3', '22', '5,04')],
                [12, ['15'].concat(many(17))]
            ]) +
            band([42, 533], [11], ['МК|st', 'Маршрутная карта|st lg']),
            '<button class="anchor" aria-label="Выделить таблицу"><svg viewBox="0 0 13 13"><path d="M6.500 1v11M1 6.500h11M5 2.500L6.500 1 8 2.500M5 10.500L6.500 12 8 10.500M2.500 5L1 6.500 2.500 8M10.500 5L12 6.500 10.500 8"/></svg></button><i class="grip"></i>');
    }

    // operation card, first page
    function opCard(number, op, times, lines) {
        var h = [13, 13, 14];
        return sheet(['ГОСТ 3.1404-86', 'Форма 3'],
            stamp(8, true) +
            band([382, 472, 505, 533], [18], ['', '0114000014|lg', '', '1']) +
            band([64, 143, 179, 205, 285, 379, 449, 533], [10, 10, 10],
                ['Разработал|f', '', '', '', '|r3', '|r3', '|r3', number + '|r3 kr lg', 'Проверил|f'].concat(many(7))) +
            band([64, 143, 179, 205, 458, 500, 533], [10, 9], ['', '', '', '', '\u2003\u2003\u2003\u2003Полумуфта|r2 lg', '|r2', op + '|r2 kr', 'Н.Контр.|f', '', '', '']) +
            band([154, 282, 337, 365, 403, 483, 506, 533], [10],
                ['Наименование операции', 'Материал', 'Твердость', 'Е<sub>в</sub>', 'МД', 'Профиль и размеры', 'МЗ|b', 'КОИД|b kr']) +
            band([154, 282, 337, 365, 403, 483, 506, 533], [17],
                ['Токарная с ЧПУ|lg', 'СЧ20 ГОСТ 1412-85|lg', '200 НВ|sans', 'кг', '0,46|sans', 'Отливка Ø80×45,6', '0,59|sans', '1|sans kr']) +
            band([154, 282, 315, 351, 383, 413, 533], [10],
                ['Оборудование, устройства ЧПУ', 'Обозначение программы', 'Т<sub>О</sub>', 'Т<sub>В</sub>', 'Т<sub>П.З.</sub>', 'Т<sub>ШТ.К.</sub>', 'СОЖ|kr']) +
            band([154, 282, 315, 351, 383, 413, 533], [20],
                ['16К20Ф3|lg kb', '|kb'].concat(times.map(function (t) { return t + '|sans kb'; }), 'эмульсия|sans kr kb')) +
            table([23, 202, 254, 320, 372, 401, 434, 476, 505, 533],
                [[12, ['Р', '', 'ПИ', 'D или В', 'L', 't', 'i', 'S', 'n', 'V']]].concat(lines.map(function (l, i) {
                    var row = [l[0] + '|' + (i < 11 ? 'db' : '')];
                    if (l.length > 2) {
                        row.push('|nr', '|nr');
                        l.slice(1).forEach(function (v, j) { row.push(v + (j < 6 ? '|nr' : '')); });
                    } else {
                        row.push((l[1] || '') + '|l|9');
                    }
                    return [h[i % 3], row];
                }))) +
            band([41, 533], [17], ['ОК', 'ОПЕРАЦИОННАЯ КАРТА МЕХАНИЧЕСКОЙ ОБРАБОТКИ|sans lg']));
    }

    // operation card, continuation page
    function opNext(number, lines) {
        var rows = [];
        for (var i = 0; i < 19; i++) {
            var l = lines[i] || [];
            var n = (i < 9 ? '0' : '') + (i + 1);
            var v = l.length > 2 ? l.slice(2) : many(7);
            rows.push([i % 2 ? 14 : 13, [(l[0] || '') + n + (i < 18 ? '|db' : ''), (l[1] || '') + '|l or', '|or']
                .concat(v.slice(0, 5).map(function (x) { return x + '|or'; }), v[5], v[6])]);
        }
        return sheet(null,
            stamp(9) +
            band([414, 505, 533], [18], ['', '114000017|lg', '2']) +
            band([27, 46, 65, 108, 150, 178, 200, 221, 268, 306, 335, 443, 533], [10, 10, 10],
                ['|r3'].concat(many(10), '|r3 k kl', number + '|r3 k kr lg', many(20))) +
            band([23, 159, 192, 225, 259, 317, 358, 386, 410, 457, 491, 533], [10],
                ['Р|kb', '|kb', '|kb', '|kb', 'ПИ|kb', 'D или В|kb', 'L|kb', 't|kb', 'i|kb', 'S|kb', 'n|kb', 'V|kb']) +
            table([23, 225, 259, 317, 358, 386, 410, 457, 491, 533], rows) +
            band([41, 533], [15], ['ОК|st', 'ОПЕРАЦИОННАЯ КАРТА МЕХАНИЧЕСКОЙ ОБРАБОТКИ|st lg']));
    }

    function sketchCard() {
        return sheet(['ГОСТ 3.1105-84', 'Форма 7'],
            head1('2014000001') +
            band([47, 103, 151, 179, 212, 453, 473, 493, 513, 533], [9, 8],
                ['', '', '', '', '|r2', 'Полумуфта|r2 lg', '|r2', '|r2', '|r2', '005|r2', '', '', '', '']) +
            '<div class="area">' + document.getElementById('sketch').innerHTML + '</div>' +
            band([42, 533], [11], ['К.Э.|dt', 'Карта эскизов|st lg']));
    }

    var cutter = 'РИ: резец токарный для контурного точения 2103-0713 ';
    var caliper = 'СИ: Штангенциркуль ШЦ-I-150-0,1 ГОСТ 166-89';
    document.getElementById('canvas').innerHTML =
        routeCard() +
        opCard('6014000001', '005', ['0,75', '1,32', '20', '2,59'], [
            ['О01', '1. Установить заготовку в приспособление, закрепить.'],
            ['Т02', 'ПР: Патрон трехкулачковый ГОСТ 2675-80'],
            ['О03', '2. Подрезать торец А начерно, выдерживая размер 44,3h14 мм.'],
            ['Т04', cutter + 'ВК8 ГОСТ 20872-80; ' + caliper],
            ['Р05', '80', '35,3', '1,3', '1', '0,6', '315', '79,1'],
            ['О06', '3. Подрезать торец А окончательно, выдерживая размер 1.'],
            ['Т07', cutter + 'ВК6 ГОСТ 20872-80; ' + caliper + ', образцы шероховатостей'],
            ['Р08', '80', '35,3', '0,5', '1', '0,2', '500', '125,6'],
            ['О09', '4. Точить наружную ступень и фаску, выдерживая размеры 2,3.'],
            ['Т10', cutter + 'ВК6 ГОСТ 20872-80 левый; ' + caliper + ', шаблон фасочный'],
            ['Р11', '80', '11', '2,0', '1', '0,2', '400', '100,5'],
            ['12']
        ]) +
        opNext('6014000001', [
            ['О', '5. Рассверлить отверстие, выдерживая размер 4.'],
            ['Т', 'РИ: сверло 2301-0028 Р6М5 ГОСТ 10903-77;  СИ: калибр-пробка гладкий Ø10h14 ГОСТ 14810-69'],
            ['Р', '', '10', '7', '1', '1', '0,2', '500', '15,7'],
            [],
            ['О', '6. Открепить заготовку и уложить в тару.']
        ]) +
        sketchCard() +
        opCard('6014000002', '010', ['0,41', '0,71', '20', '1,48'], [
            ['О01', '1. Установить заготовку в приспособление, закрепить.'],
            ['Т02', 'ПР: Патрон трехкулачковый ГОСТ 2675-80'],
            ['О03', '2. Подрезать торец Б начерно, выдерживая размер 42,5h14 мм.'],
            ['Т04', cutter + 'ВК8 ГОСТ 20872-80; ' + caliper],
            ['Р05', '40', '14', '1,3', '1', '0,6', '630', '79,1'],
            ['О06', '3. Подрезать торец Б окончательно, выдерживая размер 1.'],
            ['Т07', cutter + 'ВК6 ГОСТ 20872-80; ' + caliper + ', образцы шероховатостей'],
            ['Р08', '40', '14', '0,5', '1', '0,2', '1000', '125,6'],
            ['О09', '4. Расточить отверстие В начерно, выдерживая размер Ø21,6Н14 мм и размер 2.'],
            ['Т10', 'РИ: резец расточной 2141-0002 ВК8 ГОСТ 18883-73; СИ: Штангенциркуль ШЦ-I-125-0,1 ГОСТ 166-89'],
            ['Р11', '21,6', '33', '1,1', '1', '0,6', '1000', '67,8'],
            ['12']
        ]) +
        opNext('6014000002', [
            ['О', '5. Расточить канавку, выдерживая размеры 2,3,4.'],
            ['Т', 'РИ: резец канавочный расточной специальный ВК6;  СИ: шаблон канавочный специальный'],
            ['Р', '', '30', '7', '4', '1', '0,1', '630', '59,4'],
            [],
            ['О', '6. Расточить отверстие и фаску, выдерживая размеры 5,6,7.'],
            ['Т', 'РИ: резец расточной 2141-0002 ВК6 ГОСТ 18883-73; СИ: Нутромер индикаторный НИ-25 ГОСТ 868-82, образцы шероховатостей, шаблон фасочный'],
            ['Р', '', '22,8', '33', '0,6', '1', '0,2', '1250', '89,5'],
            [],
            ['О', '7. Открепить заготовку и уложить в тару.']
        ]) +
        many(3, sheet(null, '')).join('');

    // ruler numbers, every 2 cm
    function scale(id, last) {
        var s = '';
        for (var i = 2; i <= last; i += 2) {
            s += '<span>' + i + '</span>';
        }
        document.getElementById(id).insertAdjacentHTML('beforeend', s);
    }
    scale('hscale', 26);
    scale('vscale', 18);
})();
```
